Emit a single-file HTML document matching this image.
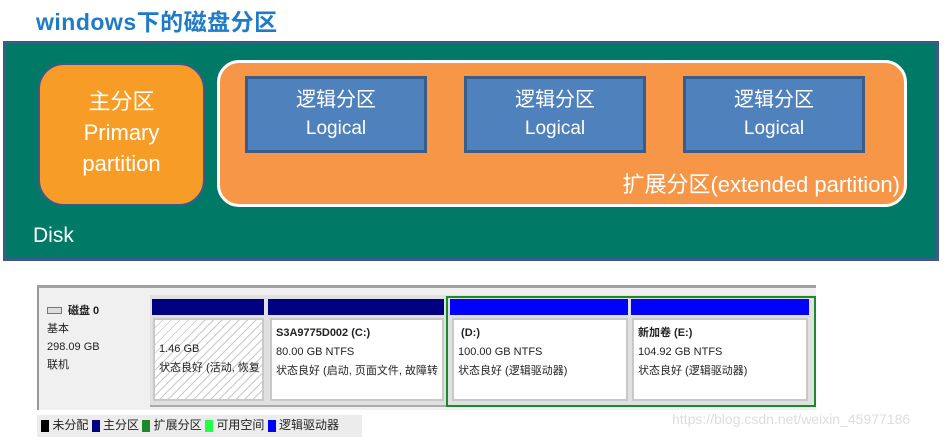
<!DOCTYPE html>
<html><head><meta charset="utf-8"><style>
*{margin:0;padding:0;box-sizing:border-box}
body{width:952px;height:440px;background:#fff;position:relative;overflow:hidden;font-family:"Liberation Sans","Noto Sans CJK SC",sans-serif}
.a{position:absolute}
.t{color:#fff;text-align:center}
.log{position:absolute;top:76px;width:182px;height:77px;background:#4f81bd;border:3px solid #385d8a;color:#fff;text-align:center;font-size:20px;line-height:28px;padding-top:7px}
.log span{font-size:19px}
.sm{font-size:11px;color:#222;line-height:19px;font-family:"Liberation Sans","Noto Sans CJK SC",sans-serif}
.hd{position:absolute;top:299px;height:16px}
.bd{position:absolute;top:318px;height:83px;background:#fff;border:2px solid #c8c8c8;padding:4px 4px;white-space:nowrap;overflow:hidden}
</style></head><body>
<div class="a" style="left:36px;top:3px;font-size:23px;font-weight:bold;color:#1f7ac8;letter-spacing:0.5px">windows下的磁盘分区</div>
<div class="a" style="left:3px;top:41px;width:936px;height:220px;background:#007a66;border:3px solid #3b5a8c"></div>
<div class="a t" style="left:38px;top:63px;width:167px;height:143px;background:#f79d27;border:2px solid #3f5a8a;border-radius:26px;padding-top:21px;font-size:22px;line-height:31px">主分区<br>Primary<br>partition</div>
<div class="a" style="left:217px;top:60px;width:690px;height:147px;background:#f79646;border:3px solid #fff;border-radius:22px"></div>
<div class="log" style="left:245px">逻辑分区<br><span>Logical</span></div>
<div class="log" style="left:464px">逻辑分区<br><span>Logical</span></div>
<div class="log" style="left:683px">逻辑分区<br><span>Logical</span></div>
<div class="a t" style="left:560px;top:167px;width:340px;text-align:right;font-size:22px;color:#fff">扩展分区(extended partition)</div>
<div class="a" style="left:33px;top:224px;font-size:21px;color:#fff">Disk</div>

<div class="a" style="left:37px;top:285px;width:779px;height:3px;background:#a0a0a0"></div>
<div class="a" style="left:37px;top:288px;width:779px;height:122px;background:#f0f0f0"></div>
<div class="a" style="left:37px;top:288px;width:2px;height:122px;background:#999"></div>
<div class="a" style="left:150px;top:295px;width:666px;height:112px;background:#e0e0e0;border-bottom:2px solid #aaa"></div>
<div class="a sm" style="left:47px;top:302px;line-height:18px"><span style="display:inline-block;width:15px;height:7px;border:1px solid #777;background:#ddd;margin-right:6px"></span><b>磁盘 0</b><br>基本<br>298.09 GB<br>联机</div>

<div class="hd" style="left:152px;width:112px;background:#000080"></div>
<div class="bd sm" style="left:153px;width:111px;background:repeating-linear-gradient(135deg,#fff 0 5px,#c8c8c8 5px 6px);padding-top:20px">1.46 GB<br>状态良好 (活动, 恢复</div>
<div class="hd" style="left:268px;width:176px;background:#000080"></div>
<div class="bd sm" style="left:270px;width:174px"><b>S3A9775D002 (C:)</b><br>80.00 GB NTFS<br>状态良好 (启动, 页面文件, 故障转</div>
<div class="a" style="left:446px;top:296px;width:370px;height:111px;border:2px solid #1a8a2a"></div>
<div class="hd" style="left:450px;width:178px;background:#0000ff"></div>
<div class="bd sm" style="left:452px;width:176px"><b>&nbsp;(D:)</b><br>100.00 GB NTFS<br>状态良好 (逻辑驱动器)</div>
<div class="hd" style="left:631px;width:178px;background:#0000ff"></div>
<div class="bd sm" style="left:632px;width:176px"><b>新加卷 (E:)</b><br>104.92 GB NTFS<br>状态良好 (逻辑驱动器)</div>

<div class="a sm" style="left:37px;top:415px;width:325px;height:22px;background:#ececec;padding:1px 4px;white-space:nowrap;font-size:12px">
<span style="display:inline-block;width:8px;height:12px;background:#000;vertical-align:middle"></span> 未分配
<span style="display:inline-block;width:8px;height:12px;background:#000080;vertical-align:middle"></span> 主分区
<span style="display:inline-block;width:8px;height:12px;background:#1a8a2a;vertical-align:middle"></span> 扩展分区
<span style="display:inline-block;width:8px;height:12px;background:#22ff44;vertical-align:middle"></span> 可用空间
<span style="display:inline-block;width:8px;height:12px;background:#0000ff;vertical-align:middle"></span> 逻辑驱动器</div>
<div class="a" style="left:672px;top:411px;font-size:14px;color:#ddd">https://blog.csdn.net/weixin_45977186</div>
</body></html>
